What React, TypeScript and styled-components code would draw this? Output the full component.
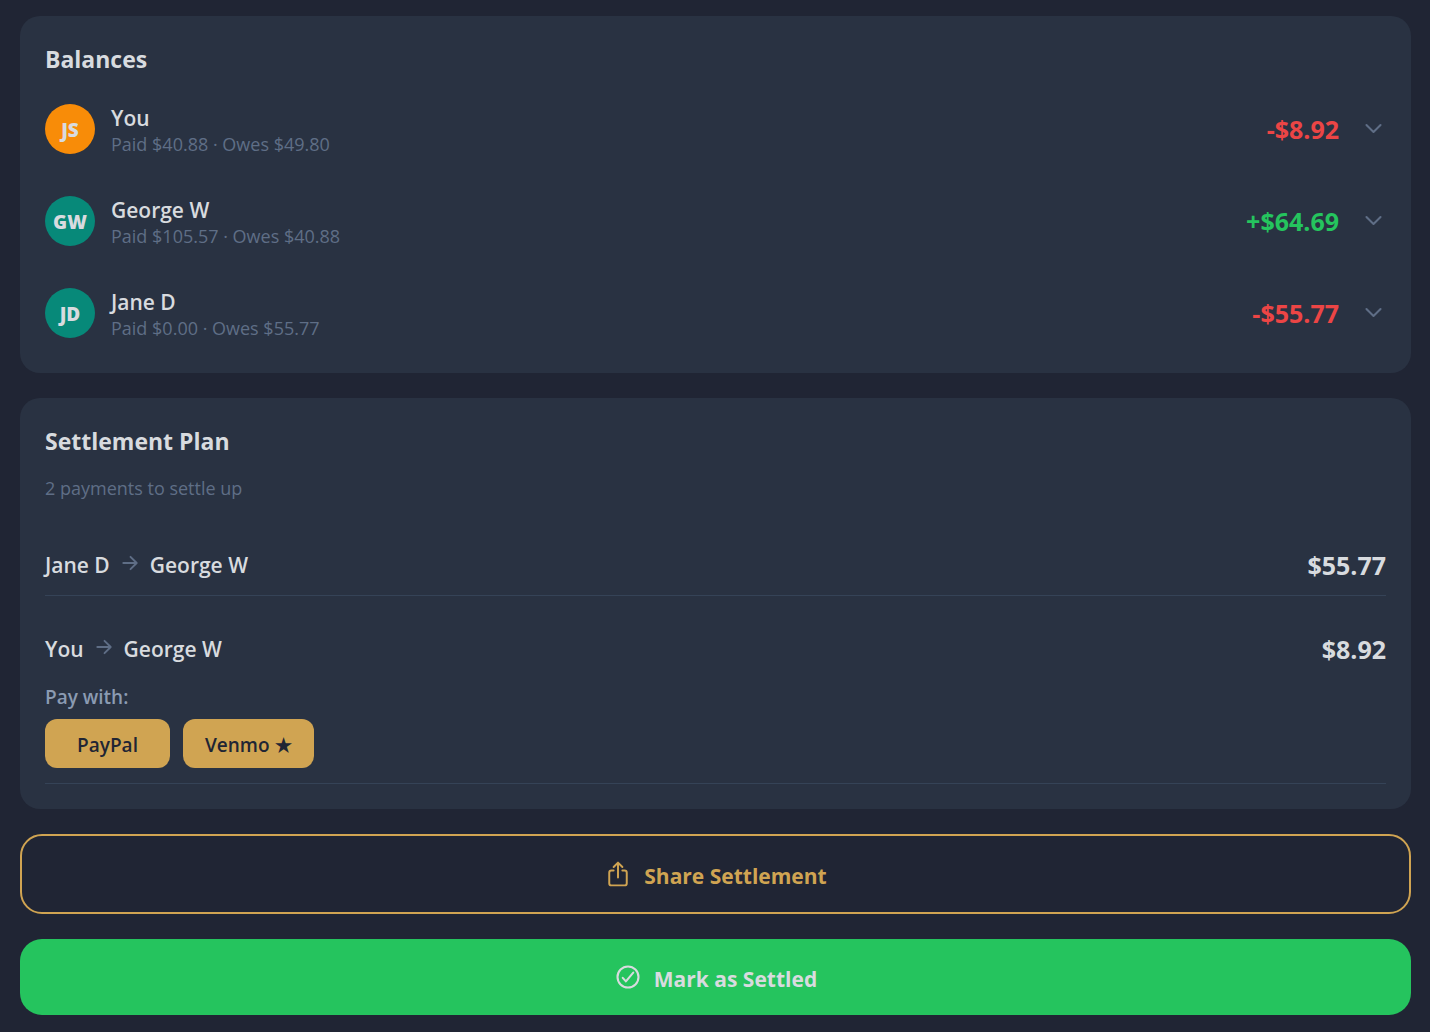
import React from "react";
import styled, { createGlobalStyle } from "styled-components";

const color = {
  page: "#202534",
  card: "#293242",
  text: "#d8dbdf",
  muted: "#5f6e86",
  label: "#8b9bb2",
  line: "#354357",
  gold: "#d0a452",
  green: "#25c45e",
  red: "#ec4545",
  orange: "#f88c08",
  teal: "#078979",
};

const GlobalStyle = createGlobalStyle`
  *, *::before, *::after { box-sizing: border-box; }
  body {
    margin: 0;
    background: ${color.page};
    color: ${color.text};
    font-family: "Segoe UI", "Open Sans", "Noto Sans", sans-serif;
  }
  h2, p, ul { margin: 0; padding: 0; }
  ul { list-style: none; }
  button { font-family: inherit; cursor: pointer; }
`;

const Page = styled.main`
  display: flex;
  flex-direction: column;
  gap: 25px;
  padding: 16px 19px 16px 20px;
`;

const Card = styled.section`
  padding: 25px;
  border-radius: 20px;
  background: ${color.card};
`;

const Title = styled.h2`
  font-size: 23px;
  line-height: 36px;
  font-weight: 700;
`;

const BalanceList = styled.ul`
  display: flex;
  flex-direction: column;
  gap: 22px;
  padding-top: 17px;
`;

const BalanceRow = styled.button`
  display: flex;
  align-items: center;
  width: 100%;
  padding: 7px 0;
  border: 0;
  background: none;
  color: inherit;
  text-align: left;
`;

const Avatar = styled.span<{ $tone: string }>`
  display: grid;
  place-items: center;
  flex: none;
  width: 50px;
  height: 50px;
  margin-right: 16px;
  padding-top: 2px;
  border-radius: 50%;
  background: ${(p) => p.$tone};
  font-size: 19px;
  line-height: 26px;
  font-weight: 800;
`;

const Person = styled.span`
  display: flex;
  flex: 1;
  flex-direction: column;
  padding-top: 4px;
`;

const Name = styled.span`
  font-size: 21px;
  line-height: 26px;
  font-weight: 600;
`;

const Muted = styled.span`
  color: ${color.muted};
  font-size: 18px;
  line-height: 26px;
`;

const Amount = styled.span<{ $tone?: string }>`
  color: ${(p) => p.$tone ?? "inherit"};
  font-size: 25px;
  line-height: 34px;
  font-weight: 700;
`;

const Icon = styled.svg<{ $size: number }>`
  flex: none;
  width: ${(p) => p.$size}px;
  height: ${(p) => p.$size}px;
  fill: none;
  stroke: currentColor;
  stroke-linecap: round;
  stroke-linejoin: round;
`;

const ChevronBox = styled.span`
  display: flex;
  margin-left: 22px;
  padding-bottom: 2px;
  color: ${color.muted};
`;

const Summary = styled.p`
  padding: 16px 0 11px;
  color: ${color.muted};
  font-size: 18px;
  line-height: 26px;
`;

const Payment = styled.li`
  display: flex;
  flex-direction: column;
  padding: 36px 0 13px;
  border-bottom: 1px solid ${color.line};
`;

const PaymentLine = styled.div`
  display: flex;
  align-items: center;
  justify-content: space-between;
`;

const Route = styled.div`
  display: flex;
  align-items: center;
  gap: 9px;

  svg {
    margin-bottom: 4px;
    color: ${color.muted};
  }
`;

const PayWith = styled.p`
  padding: 18px 0 9px;
  color: ${color.label};
  font-size: 19px;
  line-height: 26px;
  font-weight: 600;
`;

const Methods = styled.div`
  display: flex;
  gap: 13px;
  padding-bottom: 2px;
`;

const MethodButton = styled.button`
  min-width: 125px;
  padding: 13px 22px 10px;
  border: 0;
  border-radius: 12px;
  background: ${color.gold};
  color: ${color.page};
  font-size: 19px;
  line-height: 26px;
  font-weight: 600;
`;

const ActionButton = styled.button<{ $filled?: boolean }>`
  display: flex;
  align-items: center;
  justify-content: center;
  gap: 12px;
  padding: 23px 24px;
  border: ${(p) => (p.$filled ? "0" : `2px solid ${color.gold}`)};
  border-radius: 22px;
  background: ${(p) => (p.$filled ? color.green : "transparent")};
  color: ${(p) => (p.$filled ? color.text : color.gold)};
  font-size: 21px;
  line-height: 26px;
  font-weight: 700;
`;

const ActionLabel = styled.span`
  padding-top: 4px;
`;

const Chevron = () => (
  <Icon $size={25} viewBox="0 0 512 512" strokeWidth="42" aria-hidden="true">
    <path d="M112 184l144 144 144-144" />
  </Icon>
);

const Arrow = () => (
  <Icon $size={22} viewBox="0 0 512 512" strokeWidth="44" aria-hidden="true">
    <path d="M268 112l144 144-144 144M392 256H100" />
  </Icon>
);

const ShareIcon = () => (
  <Icon $size={28} viewBox="0 0 512 512" strokeWidth="36" aria-hidden="true">
    <path d="M336 192h40a40 40 0 0140 40v192a40 40 0 01-40 40H136a40 40 0 01-40-40V232a40 40 0 0140-40h40M336 128l-80-80-80 80M256 321V48" />
  </Icon>
);

const CheckIcon = () => (
  <Icon $size={28} viewBox="0 0 512 512" strokeWidth="38" aria-hidden="true">
    <path d="M448 256c0-106-86-192-192-192S64 150 64 256s86 192 192 192 192-86 192-192z" />
    <path d="M352 176L217.6 336 160 272" />
  </Icon>
);

const balances = [
  { initials: "JS", name: "You", detail: "Paid $40.88 · Owes $49.80", amount: "-$8.92", avatar: color.orange, tone: color.red },
  { initials: "GW", name: "George W", detail: "Paid $105.57 · Owes $40.88", amount: "+$64.69", avatar: color.teal, tone: color.green },
  { initials: "JD", name: "Jane D", detail: "Paid $0.00 · Owes $55.77", amount: "-$55.77", avatar: color.teal, tone: color.red },
];

const payments = [
  { from: "Jane D", to: "George W", amount: "$55.77", methods: [] as string[] },
  { from: "You", to: "George W", amount: "$8.92", methods: ["PayPal", "Venmo ★"] },
];

export default function App() {
  return (
    <>
      <GlobalStyle />
      <Page>
        <Card>
          <Title>Balances</Title>
          <BalanceList>
            {balances.map((b) => (
              <li key={b.name}>
                <BalanceRow type="button" aria-expanded="false">
                  <Avatar $tone={b.avatar}>{b.initials}</Avatar>
                  <Person>
                    <Name>{b.name}</Name>
                    <Muted>{b.detail}</Muted>
                  </Person>
                  <Amount $tone={b.tone}>{b.amount}</Amount>
                  <ChevronBox>
                    <Chevron />
                  </ChevronBox>
                </BalanceRow>
              </li>
            ))}
          </BalanceList>
        </Card>

        <Card>
          <Title>Settlement Plan</Title>
          <Summary>2 payments to settle up</Summary>
          <ul>
            {payments.map((p) => (
              <Payment key={p.from}>
                <PaymentLine>
                  <Route>
                    <Name>{p.from}</Name>
                    <Arrow />
                    <Name>{p.to}</Name>
                  </Route>
                  <Amount>{p.amount}</Amount>
                </PaymentLine>
                {p.methods.length > 0 && (
                  <>
                    <PayWith>Pay with:</PayWith>
                    <Methods>
                      {p.methods.map((m) => (
                        <MethodButton type="button" key={m}>
                          {m}
                        </MethodButton>
                      ))}
                    </Methods>
                  </>
                )}
              </Payment>
            ))}
          </ul>
        </Card>

        <ActionButton type="button">
          <ShareIcon />
          <ActionLabel>Share Settlement</ActionLabel>
        </ActionButton>
        <ActionButton type="button" $filled>
          <CheckIcon />
          <ActionLabel>Mark as Settled</ActionLabel>
        </ActionButton>
      </Page>
    </>
  );
}
